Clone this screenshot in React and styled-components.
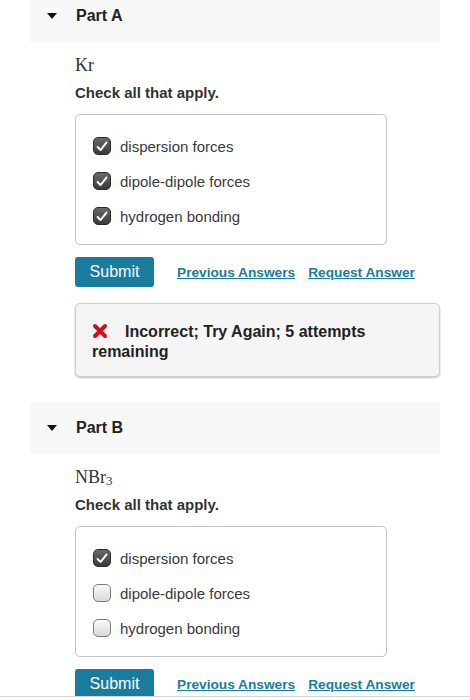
import styled, { createGlobalStyle } from "styled-components";

const GlobalStyle = createGlobalStyle`
  body {
    margin: 0;
    background: #fff;
    font-family: "Liberation Sans", Arial, sans-serif;
    color: #222;
    overflow: hidden;
  }
`;

const Page = styled.div`
  padding-left: 30px;
  width: 410px;
  margin-top: -10px;
`;

const Part = styled.section`
  margin-bottom: 25px;
`;

const PartHeader = styled.div`
  height: 52px;
  background: #f7f7f7;
  display: flex;
  align-items: center;
  padding-left: 17px;
  gap: 19px;
  font-size: 16px;
  font-weight: bold;
  color: #222;
`;

const Caret = styled.span`
  width: 0;
  height: 0;
  border-left: 5.5px solid transparent;
  border-right: 5.5px solid transparent;
  border-top: 6px solid #111;
`;

const Body = styled.div`
  padding-left: 45px;
  padding-top: 12px;
`;

const Formula = styled.div`
  font-family: "Liberation Serif", "Times New Roman", serif;
  font-size: 18px;
  color: #333;
  height: 22px;
  line-height: 22px;
  sub {
    font-size: 13px;
    line-height: 0;
    vertical-align: -2px;
  }
`;

const Prompt = styled.div`
  margin-top: 8px;
  font-size: 15px;
  font-weight: bold;
  color: #333;
  line-height: 17px;
`;

const ChoiceBox = styled.div`
  margin-top: 13px;
  width: 312px;
  height: 131px;
  border: 1px solid #c4c4c4;
  border-radius: 5px;
  box-sizing: border-box;
  padding: 22px 0 0 17px;
  display: flex;
  flex-direction: column;
  gap: 17px;
`;

const Choice = styled.label`
  display: flex;
  align-items: center;
  gap: 9px;
  font-size: 15px;
  color: #3a3a3a;
  height: 18px;
`;

const Box = styled.span`
  width: 18px;
  height: 18px;
  box-sizing: border-box;
  border-radius: 5px;
  display: flex;
  align-items: center;
  justify-content: center;
  border: 1px solid ${(p) => (p.$checked ? "#2a2a2a" : "#7a7a7a")};
  background: ${(p) =>
    p.$checked
      ? "linear-gradient(#6a6a6a, #3a3a3a)"
      : "linear-gradient(#fafafa, #d8d8d8)"};
`;

const Actions = styled.div`
  margin-top: 12px;
  display: flex;
  align-items: center;
`;

const SubmitButton = styled.button`
  width: 79px;
  height: 30px;
  border: none;
  border-radius: 3px;
  background: #1a7c9c;
  color: #fff;
  font-family: "Liberation Sans", Arial, sans-serif;
  font-size: 16px;
  padding: 0;
  margin-right: 23px;
`;

const LinkButton = styled.a`
  font-size: 13.7px;
  font-weight: bold;
  color: #1a7c9c;
  text-decoration: underline;
  margin-right: 13px;
`;

const Feedback = styled.div`
  margin-top: 16px;
  width: 365px;
  height: 74px;
  box-sizing: border-box;
  background: #f5f5f5;
  border: 1px solid #cdcdcd;
  border-radius: 5px;
  box-shadow: 0 1px 2px rgba(0, 0, 0, 0.25);
  padding: 18px 16px 0 16px;
  font-size: 16px;
  font-weight: bold;
  line-height: 20px;
  color: #222;
`;

const XMark = styled.svg`
  width: 16px;
  height: 16px;
  vertical-align: -2px;
  margin-right: 17px;
`;

const BottomEdge = styled.div`
  position: fixed;
  left: 0;
  right: 0;
  bottom: 0;
  height: 3px;
  background: #fff;
  border-top: 1px solid #d4d4d4;
`;

const Check = () => (
  <svg width="12" height="11" viewBox="0 0 12 11">
    <path
      d="M1.6 6 L4.6 9 L10.4 1.6"
      fill="none"
      stroke="#fff"
      strokeWidth="2"
      strokeLinecap="round"
      strokeLinejoin="round"
    />
  </svg>
);

const options = ["dispersion forces", "dipole-dipole forces", "hydrogen bonding"];

const Question = ({ title, formula, checked, feedback }) => (
  <Part>
    <PartHeader>
      <Caret />
      {title}
    </PartHeader>
    <Body>
      <Formula>{formula}</Formula>
      <Prompt>Check all that apply.</Prompt>
      <ChoiceBox>
        {options.map((o, i) => (
          <Choice key={o}>
            <Box $checked={checked[i]}>{checked[i] && <Check />}</Box>
            {o}
          </Choice>
        ))}
      </ChoiceBox>
      <Actions>
        <SubmitButton>Submit</SubmitButton>
        <LinkButton>Previous Answers</LinkButton>
        <LinkButton>Request Answer</LinkButton>
      </Actions>
      {feedback && (
        <Feedback>
          <XMark viewBox="0 0 16 16">
            <path
              d="M3 3 L13 13 M13 3 L3 13"
              stroke="#d0101f"
              strokeWidth="4"
              strokeLinecap="round"
            />
          </XMark>
          Incorrect; Try Again; 5 attempts remaining
        </Feedback>
      )}
    </Body>
  </Part>
);

export default function App() {
  return (
    <>
      <GlobalStyle />
      <Page>
        <Question
          title="Part A"
          formula="Kr"
          checked={[true, true, true]}
          feedback
        />
        <Question
          title="Part B"
          formula={
            <>
              NBr<sub>3</sub>
            </>
          }
          checked={[true, false, false]}
        />
      </Page>
      <BottomEdge />
    </>
  );
}
